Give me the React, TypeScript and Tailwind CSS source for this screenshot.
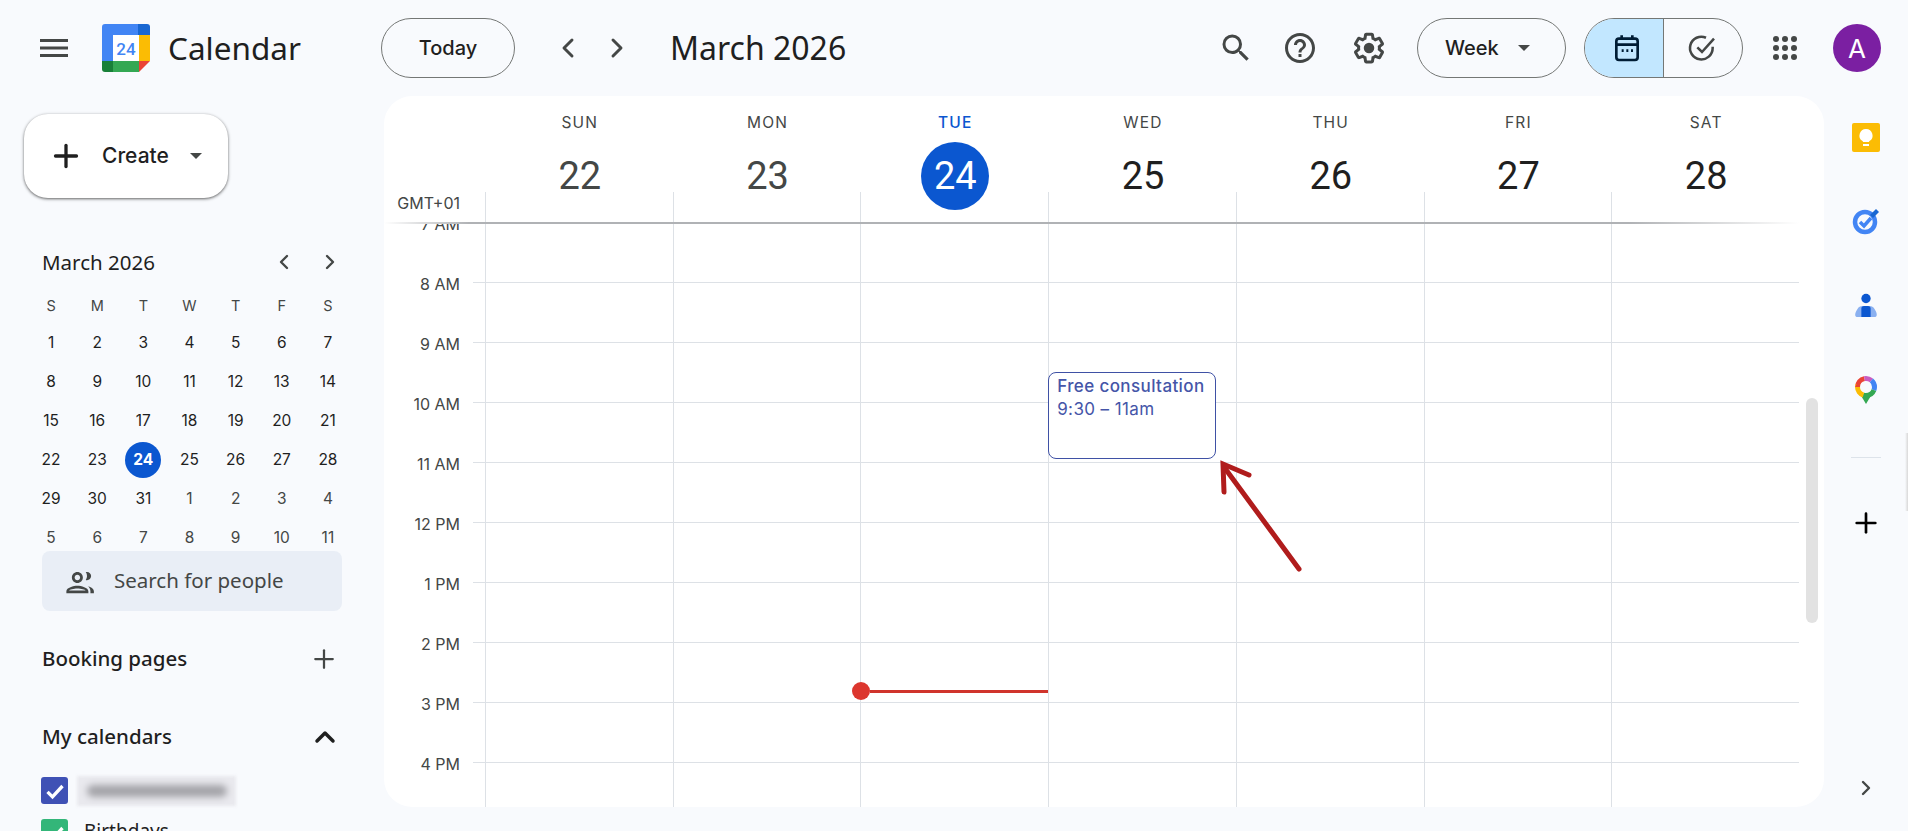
import React from 'react';
import { ChevronLeft, ChevronRight, ChevronUp, Plus } from 'lucide-react';

const ui = "font-['Inter','Roboto',sans-serif]";

const miniWeeks = [
  [1, 2, 3, 4, 5, 6, 7],
  [8, 9, 10, 11, 12, 13, 14],
  [15, 16, 17, 18, 19, 20, 21],
  [22, 23, 24, 25, 26, 27, 28],
  [29, 30, 31, 1, 2, 3, 4],
  [5, 6, 7, 8, 9, 10, 11],
];

const days = [
  { name: 'SUN', num: 22, past: true },
  { name: 'MON', num: 23, past: true },
  { name: 'TUE', num: 24, today: true },
  { name: 'WED', num: 25 },
  { name: 'THU', num: 26 },
  { name: 'FRI', num: 27 },
  { name: 'SAT', num: 28 },
];

const hours = ['7 AM', '8 AM', '9 AM', '10 AM', '11 AM', '12 PM', '1 PM', '2 PM', '3 PM', '4 PM'];

const Caret = ({ className }: { className: string }) => (
  <svg viewBox="0 0 12 6" className={className}>
    <path d="M0 0h12L6 6z" fill="currentColor" />
  </svg>
);

const Logo = () => (
  <svg viewBox="0 0 48 48" className="h-12 w-12 shrink-0">
    <path d="M3 0h33v11H11v26H0V3a3 3 0 0 1 3-3z" fill="#4285f4" />
    <path d="M36 0h9a3 3 0 0 1 3 3v8H36z" fill="#1967d2" />
    <path d="M37 11h11v26H37z" fill="#fbbc04" />
    <path d="M0 37h11v11H3a3 3 0 0 1-3-3z" fill="#188038" />
    <path d="M11 37h26v11H11z" fill="#34a853" />
    <path d="M37 37h11L37 48z" fill="#ea4335" />
    <rect x="11" y="11" width="26" height="26" fill="#fff" />
    <text x="24" y="31" textAnchor="middle" fontSize="17" fontWeight="500" fill="#4285f4" fontFamily="Roboto, sans-serif">24</text>
  </svg>
);

const TopBar = () => (
  <header className="flex h-24 shrink-0 items-center">
    <div className="flex w-[381px] shrink-0 items-center">
      <svg viewBox="0 0 28 18" className="ml-[40px] h-[18px] w-[28px] fill-[#444746]">
        <path d="M0 0h28v3H0zM0 7.500h28v3H0zM0 15h28v3H0z" />
      </svg>
      <div className="ml-[34px]">
        <Logo />
      </div>
      <span className={`ml-[18px] text-[31.5px] text-[#1f1f1f] font-['Noto_Sans',sans-serif]`}>Calendar</span>
    </div>
    <button className={`h-[60px] w-[134px] rounded-full border border-[#747775] text-[20px] font-medium text-[#1f1f1f] ${ui}`}>Today</button>
    <ChevronLeft className="ml-[37px] h-8 w-8 text-[#444746]" strokeWidth={2.2} />
    <ChevronRight className="ml-[17px] h-8 w-8 text-[#444746]" strokeWidth={2.2} />
    <h1 className={`ml-[37px] text-[32px] text-[#1f1f1f] font-['Noto_Sans',sans-serif]`}>March 2026</h1>
    <div className="ml-auto flex items-center">
      <svg viewBox="0 0 24 24" className="h-9 w-9 fill-[#444746]">
        <path d="M15.500 14h-.79l-.28-.27A6.471 6.471 0 0 0 16 9.500 6.500 6.500 0 1 0 9.500 16c1.610 0 3.090-.59 4.230-1.570l.27.28v.79l5 4.990L20.490 19l-4.990-5zm-6 0C7.010 14 5 11.990 5 9.500S7.010 5 9.500 5 14 7.010 14 9.500 11.990 14 9.500 14z" />
      </svg>
      <svg viewBox="0 0 24 24" className="ml-[28px] h-9 w-9 fill-[#444746]">
        <path d="M11 18h2v-2h-2v2zm1-16C6.48 2 2 6.48 2 12s4.48 10 10 10 10-4.48 10-10S17.52 2 12 2zm0 18c-4.41 0-8-3.59-8-8s3.59-8 8-8 8 3.59 8 8-3.59 8-8 8zm0-14c-2.21 0-4 1.79-4 4h2c0-1.1.9-2 2-2s2 .9 2 2c0 2-3 1.75-3 5h2c0-2.25 3-2.5 3-5 0-2.21-1.79-4-4-4z" />
      </svg>
      <svg viewBox="0 0 24 24" className="ml-[33px] h-9 w-9 fill-[#444746]">
        <path d="M13.85 22.25h-3.7c-.74 0-1.36-.54-1.45-1.27l-.27-1.89c-.27-.14-.53-.29-.79-.46l-1.8.72c-.7.26-1.47-.03-1.81-.65L2.2 15.53c-.35-.66-.2-1.44.36-1.88l1.53-1.19c-.01-.15-.02-.3-.02-.46s.01-.31.02-.46l-1.52-1.19c-.59-.45-.74-1.26-.37-1.88l1.85-3.19c.34-.62 1.11-.9 1.79-.63l1.81.73c.26-.17.52-.32.78-.46l.27-1.91c.09-.7.71-1.25 1.44-1.25h3.7c.74 0 1.36.54 1.45 1.27l.27 1.89c.27.14.53.29.79.46l1.8-.72c.71-.26 1.48.03 1.82.65l1.84 3.18c.36.66.2 1.44-.36 1.88l-1.52 1.19c.01.15.02.3.02.46s-.01.31-.02.46l1.52 1.19c.56.45.72 1.23.37 1.86l-1.86 3.22c-.34.62-1.11.9-1.8.63l-1.8-.72c-.26.17-.52.32-.78.46l-.27 1.91c-.1.68-.72 1.22-1.46 1.22zm-3.23-2h2.76l.37-2.55.53-.22c.44-.18.88-.44 1.34-.78l.45-.34 2.38.96 1.38-2.4-2.03-1.58.07-.56c.03-.26.06-.51.06-.78s-.03-.53-.06-.78l-.07-.56 2.03-1.58-1.39-2.4-2.39.96-.45-.35c-.42-.32-.87-.58-1.33-.77l-.52-.22-.37-2.55h-2.76l-.37 2.55-.53.21c-.44.19-.88.44-1.34.79l-.45.33-2.38-.95-1.39 2.39 2.03 1.58-.07.56a7 7 0 0 0-.06.79c0 .26.02.53.06.78l.07.56-2.03 1.58 1.38 2.4 2.39-.96.45.35c.43.33.86.58 1.33.77l.53.22.38 2.55z" />
        <circle cx="12" cy="12" r="3.5" />
      </svg>
      <button className={`ml-[30px] flex h-[60px] w-[149px] items-center rounded-full border border-[#747775] pl-[27px] text-[20px] font-medium text-[#1f1f1f] ${ui}`}>
        Week
        <Caret className="ml-[19px] h-[6px] w-3 text-[#444746]" />
      </button>
      <div className="ml-[18px] flex h-[60px] w-[159px] overflow-hidden rounded-full border border-[#747775]">
        <div className="flex w-[79px] items-center justify-center border-r border-[#747775] bg-[#c2e7ff] pl-[6px]">
          <svg viewBox="0 0 24 24" className="h-8 w-8 fill-none stroke-[#001d35]" strokeWidth="2">
            <rect x="4" y="5" width="16" height="16" rx="2" />
            <path d="M4 9.500h16M8 2.500v3M16 2.500v3" />
            <path d="M8 14h1.500M11.500 14H13M15 14h1.500" />
          </svg>
        </div>
        <div className="flex flex-1 items-center justify-center pr-[2px]">
          <svg viewBox="0 0 24 24" className="h-8 w-8 fill-none stroke-[#444746]" strokeWidth="1.9">
            <path d="M20 11v1a8.500 8.500 0 1 1-5-7.700" />
            <path d="M8.500 11.500l3.500 3.500 9-10" />
          </svg>
        </div>
      </div>
      <div className="ml-[30px] grid h-6 w-6 grid-cols-3 gap-[3px]">
        {Array.from({ length: 9 }).map((_, i) => (
          <span key={i} className="h-[6px] w-[6px] rounded-full bg-[#444746]" />
        ))}
      </div>
      <div className={`ml-[36px] mr-[27px] flex h-12 w-12 items-center justify-center rounded-full bg-[#7b1fa2] text-[26px] text-white ${ui}`}>A</div>
    </div>
  </header>
);

const MiniCalendar = () => (
  <div className={`ml-[28px] mt-[44px] h-[309px] w-[323px] overflow-hidden ${ui}`}>
    <div className="flex h-[40px] items-center pl-[14px]">
      <span className="text-[20.5px] text-[#1f1f1f] font-['Noto_Sans',sans-serif]">March 2026</span>
      <ChevronLeft className="ml-auto h-6 w-6 text-[#444746]" strokeWidth={2.4} />
      <ChevronRight className="ml-[22px] mr-[9px] h-6 w-6 text-[#444746]" strokeWidth={2.4} />
    </div>
    <div className="grid grid-cols-7 text-center">
      {['S', 'M', 'T', 'W', 'T', 'F', 'S'].map((d, i) => (
        <span key={i} className="mt-[6px] h-[35px] text-[14.5px] leading-[35px] text-[#444746]">{d}</span>
      ))}
      {miniWeeks.map((week, w) =>
        week.map((d, i) => {
          const selected = w === 3 && d === 24;
          const muted = w > 3 && (w === 5 || d < 20);
          return (
            <div key={`${w}-${i}`} className="flex h-[39px] items-center justify-center">
              <span className={`flex h-9 w-9 items-center justify-center rounded-full text-[15.5px] ${selected ? 'bg-[#0b57d0] font-bold text-white' : muted ? 'text-[#444746]' : 'text-[#1f1f1f]'}`}>{d}</span>
            </div>
          );
        })
      )}
    </div>
  </div>
);

const SideBar = () => (
  <aside className="w-[384px] shrink-0 overflow-hidden">
    <button className={`ml-6 mt-[18px] flex h-[84px] w-[204px] items-center rounded-[24px] bg-white pl-[30px] text-[21px] font-medium text-[#1f1f1f] shadow-[0_1px_3px_1px_rgba(0,0,0,0.22),0_1px_2px_rgba(0,0,0,0.35)] ${ui}`}>
      <Plus className="h-9 w-9 -ml-[6px] text-[#1f1f1f]" strokeWidth={2.2} />
      <span className="ml-[18px]">Create</span>
      <Caret className="ml-[21px] h-[6px] w-3 text-[#444746]" />
    </button>
    <MiniCalendar />
    <div className="ml-[42px] flex h-[60px] w-[300px] items-center rounded-lg bg-[#e9eef6] pl-[23px]">
      <svg viewBox="0 0 24 24" className="h-[33px] w-[33px] shrink-0 fill-[#444746]">
        <path d="M16 11c1.66 0 2.99-1.34 2.99-3S17.66 5 16 5c-.32 0-.63.05-.91.14A4.96 4.96 0 0 1 16 8c0 1.070-.34 2.060-.91 2.860.28.090.59.14.91.14zM9 13c2.200 0 4-1.800 4-4s-1.800-4-4-4-4 1.800-4 4 1.800 4 4 4zm0-6c1.100 0 2 .9 2 2s-.9 2-2 2-2-.9-2-2 .9-2 2-2zm0 8c-2.670 0-8 1.340-8 4v1.500h16V19c0-2.660-5.330-4-8-4zm-6 3.500c.22-.72 3.310-1.500 6-1.500s5.800.8 6 1.500H3zm13.500-3.300c1.600.7 4.500 1.600 4.500 3.800v1.500h-2.500V19c0-1.500-.8-2.800-2-3.800z" />
      </svg>
      <span className={`ml-[16px] -mt-[2px] text-[20.5px] text-[#444746] font-['Noto_Sans',sans-serif]`}>Search for people</span>
    </div>
    <div className={`ml-[42px] mt-[24px] flex h-[48px] w-[298px] items-center text-[20.5px] font-medium text-[#1f1f1f] font-['Noto_Sans',sans-serif]`}>
      <span className="-mt-[2px]">Booking pages</span>
      <Plus className="ml-auto mr-[1px] h-[30px] w-[30px] text-[#444746]" strokeWidth={1.8} />
    </div>
    <div className={`ml-[42px] mt-[30px] flex h-[48px] w-[298px] items-center text-[20.5px] font-medium text-[#1f1f1f] font-['Noto_Sans',sans-serif]`}>
      <span className="-mt-[2px]">My calendars</span>
      <ChevronUp className="ml-auto h-8 w-8 -mr-[1px] text-[#1f1f1f]" strokeWidth={2.6} />
    </div>
    <div className="ml-[41px] mt-[16px] flex h-[27px] items-center">
      <span className="flex h-[27px] w-[27px] items-center justify-center rounded-[3px] bg-[#3f51b5]">
        <svg viewBox="0 0 24 24" className="h-5 w-5 fill-none stroke-white" strokeWidth="4"><path d="M3 13l6 6L21 6" /></svg>
      </span>
      <span className="relative ml-[9px] flex h-[30px] w-[159px] items-center justify-center bg-[#e9e9ee] blur-[1.5px]">
        <span className="h-[12px] w-[140px] rounded-full bg-[#a3a3a8] blur-[3px]" />
      </span>
    </div>
    <div className="ml-[41px] mt-[15px] flex h-[27px]">
      <span className="flex h-[27px] w-[27px] items-center justify-center rounded-[3px] bg-[#33b679]">
        <svg viewBox="0 0 24 24" className="h-5 w-5 fill-none stroke-white" strokeWidth="4"><path d="M3 13l6 6L21 6" /></svg>
      </span>
      <span className={`ml-[16px] text-[19px] leading-[24px] text-[#1f1f1f] font-['Noto_Sans',sans-serif]`}>Birthdays</span>
    </div>
  </aside>
);

const WeekHeader = () => (
  <div className={`flex h-[126px] shrink-0 ${ui}`}>
    <div className="flex w-[101px] shrink-0 flex-col items-end justify-end pb-[7px] pr-[25px] text-[16px] text-[#444746]">GMT+01</div>
    <div className="mr-[25px] flex flex-1">
      {days.map(d => (
        <div key={d.name} className="relative flex flex-1 flex-col items-center pl-[2px] pt-[15px]">
          <span className={`text-[15.5px] tracking-[1.2px] ${d.today ? 'font-medium text-[#0b57d0]' : 'text-[#444746]'}`}>{d.name}</span>
          <span className={`mt-[8px] flex h-[68px] w-[68px] items-center justify-center rounded-full text-[38px] font-['Roboto',sans-serif] ${d.today ? 'bg-[#0b57d0] text-white' : d.past ? 'text-[#444746]' : 'text-[#1f1f1f]'}`}>{d.num}</span>
          <span className="absolute bottom-0 left-0 h-[30px] w-px bg-[#dde1e6]" />
        </div>
      ))}
    </div>
  </div>
);

const WeekGrid = () => (
  <div className={`relative flex min-h-0 flex-1 overflow-hidden ${ui}`}>
    <div className="w-[101px] shrink-0">
      {hours.map(h => (
        <div key={h} className="flex h-[60px]">
          <span className="-mt-[10px] w-[89px] pr-[13px] text-right text-[16px] leading-[24px] text-[#444746]">{h}</span>
          <span className="h-px w-3 bg-[#dde1e6]" />
        </div>
      ))}
    </div>
    <div className="mr-[25px] flex flex-1">
      {days.map(d => (
        <div key={d.name} className="relative flex-1 border-l border-[#dde1e6]">
          {hours.map(h => (
            <div key={h} className="h-[60px] border-t border-[#dde1e6]" />
          ))}
          {d.name === 'TUE' && (
            <div className="absolute left-[-9px] right-0 top-[460px] flex items-center">
              <span className="h-[18px] w-[18px] shrink-0 rounded-full bg-[#dc362e]" />
              <span className="h-[3px] flex-1 bg-[#d0342c]" />
            </div>
          )}
          {d.name === 'WED' && (
            <div className="absolute left-[-1px] top-[150px] h-[87px] w-[168px] rounded-[8px] border border-[#3f51a5] bg-white pl-[8px] pt-[2px] text-[17px] leading-[23px] tracking-[0.4px] text-[#4555a8]">
              <div className="font-medium">Free consultation</div>
              <div>9:30 – 11am</div>
            </div>
          )}
        </div>
      ))}
    </div>
    <div className="absolute right-[6px] top-[176px] h-[225px] w-3 rounded-full bg-[#e2e2e2]" />
    <svg viewBox="0 0 100 130" className="absolute left-[833px] top-[237px] h-[130px] w-[100px] fill-none stroke-[#b01c1c]" strokeWidth="5" strokeLinecap="round">
      <path d="M82 110L7 8" />
      <path d="M7 33L6 5l26 11" />
    </svg>
  </div>
);

const RightRail = () => (
  <aside className="relative flex flex-1 flex-col items-center">
    <div className="mt-[27px] flex h-[29px] w-[28px] items-center justify-center rounded-[2px] bg-[#fbbc04]">
      <svg viewBox="0 0 24 24" className="h-6 w-6 fill-white">
        <path d="M12 3a6.500 6.500 0 0 0-3.500 12c.4.3.5.7.5 1h6c0-.3.1-.7.5-1A6.500 6.500 0 0 0 12 3zM9 18h6v2H9z" />
      </svg>
    </div>
    <svg viewBox="0 0 28 28" className="mt-[55px] h-7 w-7 fill-none">
      <circle cx="13" cy="15" r="10" stroke="#4285f4" strokeWidth="4.5" />
      <path d="M8 15l4 4 7-8" stroke="#4285f4" strokeWidth="3.5" />
      <path d="M18 8l6-6 3 3-6 6z" fill="#1967d2" />
    </svg>
    <svg viewBox="0 0 28 28" className="mt-[57px] h-[26px] w-[26px]">
      <circle cx="14" cy="7" r="5" fill="#0b57d0" />
      <path d="M5 27c-3.500 0-3.500-4 0-9 1-2 3-3 5-3h8c2 0 4 1 5 3 3.500 5 3.500 9 0 9z" fill="#8ab0f0" />
      <path d="M9 27V18a3 3 0 0 1 3-3h4a3 3 0 0 1 3 3v9z" fill="#0b57d0" />
    </svg>
    <svg viewBox="0 0 22 28" className="mt-[58px] h-7 w-[22px] fill-none">
      <path d="M5 18l6 10 6-10z" fill="#34a853" />
      <circle cx="11" cy="11" r="8.500" stroke="#ea4335" strokeWidth="5" pathLength="100" strokeDasharray="22 78" strokeDashoffset="50" />
      <circle cx="11" cy="11" r="8.500" stroke="#c95cc0" strokeWidth="5" pathLength="100" strokeDasharray="14 86" strokeDashoffset="28" />
      <circle cx="11" cy="11" r="8.500" stroke="#4285f4" strokeWidth="5" pathLength="100" strokeDasharray="20 80" strokeDashoffset="14" />
      <circle cx="11" cy="11" r="8.500" stroke="#34a853" strokeWidth="5" pathLength="100" strokeDasharray="24 76" strokeDashoffset="-6" />
      <circle cx="11" cy="11" r="8.500" stroke="#fbbc04" strokeWidth="5" pathLength="100" strokeDasharray="20 80" strokeDashoffset="-30" />
    </svg>
    <div className="mt-[53px] h-px w-[30px] bg-[#dde3ea]" />
    <Plus className="mt-[49px] h-8 w-8 text-black" strokeWidth={2} />
    <ChevronRight className="mt-[237px] h-6 w-6 text-[#444746]" strokeWidth={2.4} />
    <div className="absolute right-0 top-[337px] h-[78px] w-[3px] bg-gradient-to-r from-[#f8fafd] to-[#d8d8d8]" />
  </aside>
);

export default function App() {
  return (
    <div className="flex h-screen w-full flex-col overflow-hidden bg-[#f8fafd]">
      <TopBar />
      <div className="flex min-h-0 flex-1">
        <SideBar />
        <main className="mb-[24px] flex w-[1440px] shrink-0 flex-col overflow-hidden rounded-[28px] bg-white">
          <WeekHeader />
          <div className="relative z-10 h-[2px] w-[1415px] shrink-0 bg-[linear-gradient(90deg,#ffffff_0%,#b0b2b5_6%,#b0b2b5_88%,#ffffff_100%)]" />
          <div className="-mt-[2px] flex min-h-0 flex-1">
            <WeekGrid />
          </div>
        </main>
        <RightRail />
      </div>
    </div>
  );
}
